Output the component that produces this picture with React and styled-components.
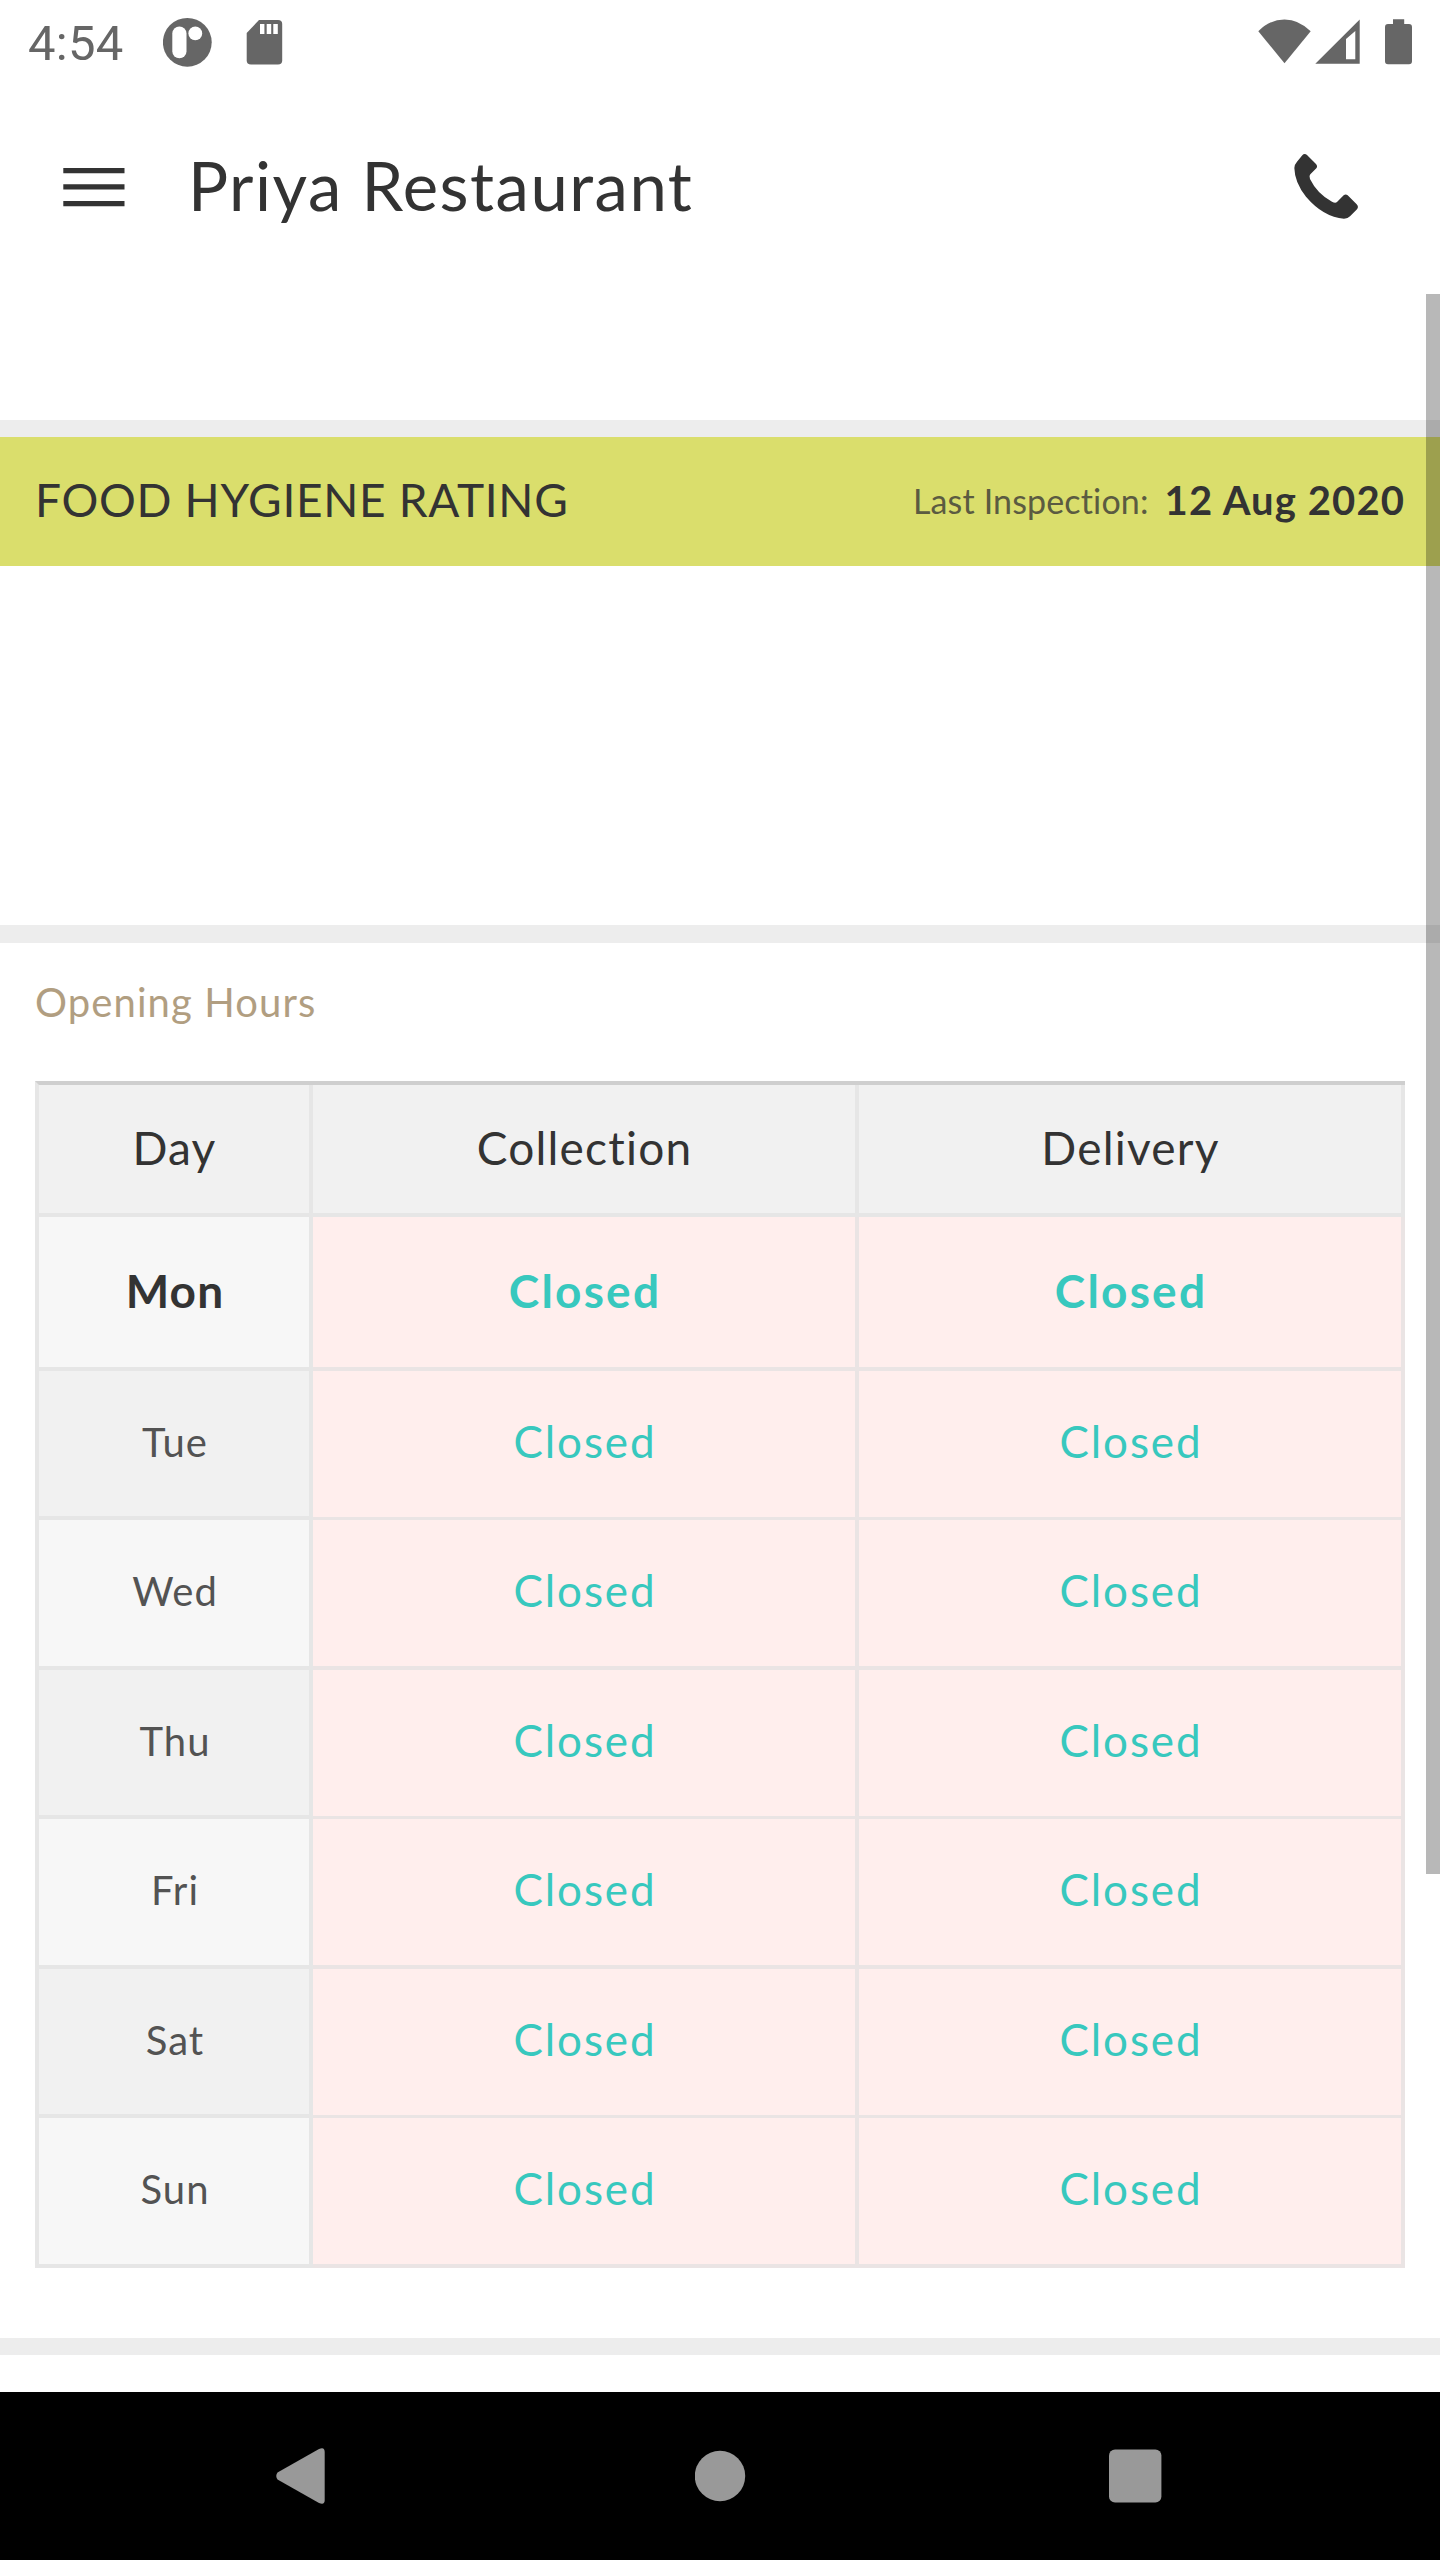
import React from 'react';
import styled, { createGlobalStyle } from 'styled-components';

const GlobalStyle = createGlobalStyle`
  * {
    box-sizing: border-box;
  }

  body {
    margin: 0;
    background: #fff;
  }

  svg {
    display: block;
    flex: none;
  }
`;

const Screen = styled.div`
  position: relative;
  display: flex;
  flex-direction: column;
  width: 1440px;
  height: 2560px;
  overflow: hidden;
  background: #fff;
  color: #333;
  font-family: Lato, "Open Sans", sans-serif;
`;

const StatusBar = styled.div`
  display: flex;
  justify-content: space-between;
  height: 84px;
  padding: 0 28px;
  color: #666;
`;

const StatusGroup = styled.div`
  display: flex;
  align-items: flex-start;
`;

const Clock = styled.div`
  width: 135px;
  font-family: Roboto, sans-serif;
  font-size: 49px;
  line-height: 88px;
  letter-spacing: 0.3px;
`;

const SdIcon = styled.svg`
  margin-left: 34px;
`;

const SignalIcon = styled.svg`
  margin: 0 25px 0 4px;
`;

const AppBar = styled.header`
  display: flex;
  align-items: center;
  height: 210px;
  padding: 0 79px 7px 63px;
`;

const Title = styled.h1`
  flex: 1;
  margin: 0 0 0 63px;
  font-size: 67px;
  font-weight: 400;
  line-height: 79px;
  letter-spacing: 1.5px;
`;

const Content = styled.main`
  display: flex;
  flex-direction: column;
  flex: 1;
`;

const Spacer = styled.div`
  height: ${props => props.$height}px;
`;

const Divider = styled.div`
  height: ${props => props.$height || 17}px;
  background: #ededed;
`;

const RatingBar = styled.section`
  display: flex;
  align-items: center;
  height: 129px;
  padding: 0 35px 4px;
  background: #dade6c;
`;

const RatingTitle = styled.h2`
  flex: 1;
  margin: 0;
  font-size: 46px;
  font-weight: 400;
  letter-spacing: 0.7px;
`;

const InspectionLabel = styled.span`
  margin-right: 16px;
  padding-top: 1px;
  color: #5b5b41;
  font-size: 34px;
  letter-spacing: 0.15px;
`;

const InspectionDate = styled.span`
  font-size: 40px;
  font-weight: 700;
  letter-spacing: 1.1px;
`;

const HoursSection = styled.section`
  padding: 35px 35px 70px;
`;

const HoursTitle = styled.h3`
  margin: 0 0 55px;
  color: #b19e81;
  font-size: 40px;
  font-weight: 400;
  line-height: 48px;
  letter-spacing: 1.1px;
`;

const HoursTable = styled.div`
  border-top: 4px solid #cfcfcf;
  border-left: 4px solid #e6e6e6;
`;

const Row = styled.div`
  display: grid;
  grid-template-columns: 274px 546px 546px;
  height: ${props => props.$height}px;
`;

const Cell = styled.div`
  display: flex;
  align-items: center;
  justify-content: center;
  padding-bottom: 4px;
  border-right: 4px solid #e6e6e6;
  border-bottom: 4px solid #e6e6e6;
`;

const HeadCell = styled(Cell)`
  background: #f1f1f1;
  font-size: 46px;
  letter-spacing: 1.2px;
  text-indent: 1px;
`;

const DayCell = styled(Cell)`
  background: ${props => (props.$shaded ? '#f1f1f1' : '#f7f7f7')};
  color: ${props => (props.$today ? '#333' : '#535353')};
  font-size: ${props => (props.$today ? 46 : 40)}px;
  font-weight: ${props => (props.$today ? 700 : 400)};
  letter-spacing: ${props => (props.$today ? 1.2 : 1)}px;
  text-indent: 2px;
`;

const TimeCell = styled(Cell)`
  padding-bottom: ${props => (props.$today ? 4 : 6)}px;
  border-color: #eae4e4;
  border-bottom-width: ${props => (props.$thin ? 3 : 4)}px;
  background: #ffeeed;
  color: #38c8be;
  font-size: ${props => (props.$today ? 46 : 44)}px;
  font-weight: ${props => (props.$today ? 700 : 400)};
  letter-spacing: ${props => (props.$today ? 2.2 : 1.9)}px;
  text-indent: 2px;
`;

const NavBar = styled.nav`
  display: flex;
  align-items: center;
  height: 168px;
  padding-left: 276px;
  background: #000;
`;

const HomeIcon = styled.svg`
  margin: 0 363px 0 370px;
`;

const ScrollThumb = styled.div`
  position: absolute;
  top: 294px;
  right: 0;
  width: 14px;
  height: 1580px;
  background: rgba(0, 0, 0, 0.28);
`;

const hours = [
  { day: 'Mon', height: 154, today: true },
  { day: 'Tue', height: 149, thin: true },
  { day: 'Wed', height: 150 },
  { day: 'Thu', height: 149, thin: true },
  { day: 'Fri', height: 150 },
  { day: 'Sat', height: 149, thin: true },
  { day: 'Sun', height: 150 },
];

function App() {
  return (
    <>
      <GlobalStyle />
      <Screen>
        <StatusBar>
          <StatusGroup>
            <Clock>4:54</Clock>
            <svg width="49" height="84" viewBox="0 0 49 84">
              <circle cx="24.3" cy="42.3" r="24.4" fill="#666" />
              <rect x="9.3" y="26.5" width="14.2" height="31.8" rx="7.1" fill="#fff" />
              <circle cx="32.3" cy="33.4" r="6.9" fill="#fff" />
            </svg>
            <SdIcon width="37" height="84" viewBox="0 0 37 84">
              <path d="M13 20H32Q36.2 20 36.2 24V60.5Q36.2 64.6 32 64.6H5Q0.7 64.6 0.7 60.5V33Z" fill="#666" />
              <path d="M14 24h4.4v10H14zM20.7 24h4.5v10h-4.5zM27.3 24h4.5v10h-4.5z" fill="#fff" />
            </SdIcon>
          </StatusGroup>
          <StatusGroup>
            <svg width="53" height="84" viewBox="0 0 53 84">
              <path d="M0.3 31.3Q12 19.4 26.5 19.4T52.7 31.3L26.5 63.2Z" fill="#666" />
            </svg>
            <SignalIcon width="45" height="84" viewBox="0 0 45 84">
              <path fillRule="evenodd" d="M0.3 63.7L44.7 19.5V63.7ZM31 39V59.3H40.3V31Z" fill="#666" />
            </SignalIcon>
            <svg width="27" height="84" viewBox="0 0 27 84">
              <path d="M8 19.3H19.2V24H24Q27 24 27 27V61.3Q27 64.3 24 64.3H3Q0 64.3 0 61.3V27Q0 24 3 24H8Z" fill="#666" />
            </svg>
          </StatusGroup>
        </StatusBar>

        <AppBar>
          <svg width="62" height="65" viewBox="0 0 62 65">
            <path d="M0.3 15h61.2v5.2H0.3zM0.3 31.2h61.2v5.2H0.3zM0.3 48h61.2v5.2H0.3z" fill="#333" />
          </svg>
          <Title>Priya Restaurant</Title>
          <svg width="69" height="67" viewBox="276 456 207 201">
            <path
              d="M314 462Q318 462 321 465L348 492Q354 499 349 505L331 523Q326 528 330 537Q352 582 396 605Q406 611 411 606L431 586Q437 581 443 586L470 613Q477 621 471 628L450 649Q444 656 432 656Q370 651 318 590Q284 548 283 504Q283 494 291 485L307 466Q310 462 314 462Z"
              fill="#333"
            />
          </svg>
        </AppBar>

        <Content>
          <Spacer $height={126} />
          <Divider />
          <RatingBar>
            <RatingTitle>FOOD HYGIENE RATING</RatingTitle>
            <InspectionLabel>Last Inspection:</InspectionLabel>
            <InspectionDate>12 Aug 2020</InspectionDate>
          </RatingBar>
          <Spacer $height={359} />
          <Divider $height={18} />
          <HoursSection>
            <HoursTitle>Opening Hours</HoursTitle>
            <HoursTable>
              <Row $height={132}>
                <HeadCell>Day</HeadCell>
                <HeadCell>Collection</HeadCell>
                <HeadCell>Delivery</HeadCell>
              </Row>
              {hours.map((row, index) => (
                <Row key={row.day} $height={row.height}>
                  <DayCell $today={row.today} $shaded={index % 2 === 1}>{row.day}</DayCell>
                  <TimeCell $today={row.today} $thin={row.thin}>Closed</TimeCell>
                  <TimeCell $today={row.today} $thin={row.thin}>Closed</TimeCell>
                </Row>
              ))}
            </HoursTable>
          </HoursSection>
          <Divider />
        </Content>

        <NavBar>
          <svg width="49" height="56" viewBox="0 0 49 56">
            <path d="M1.5 24.5L43 1Q48.7 -1.5 48.7 4V52Q48.7 57.5 43 55L1.5 31.5Q-1 28 1.5 24.5Z" fill="#999" />
          </svg>
          <HomeIcon width="51" height="52" viewBox="0 0 51 52">
            <circle cx="25" cy="26" r="25.2" fill="#999" />
          </HomeIcon>
          <svg width="53" height="54" viewBox="0 0 53 54">
            <rect x="0" y="0.6" width="52.4" height="52.8" rx="6" fill="#999" />
          </svg>
        </NavBar>
        <ScrollThumb />
      </Screen>
    </>
  );
}

export default App;
